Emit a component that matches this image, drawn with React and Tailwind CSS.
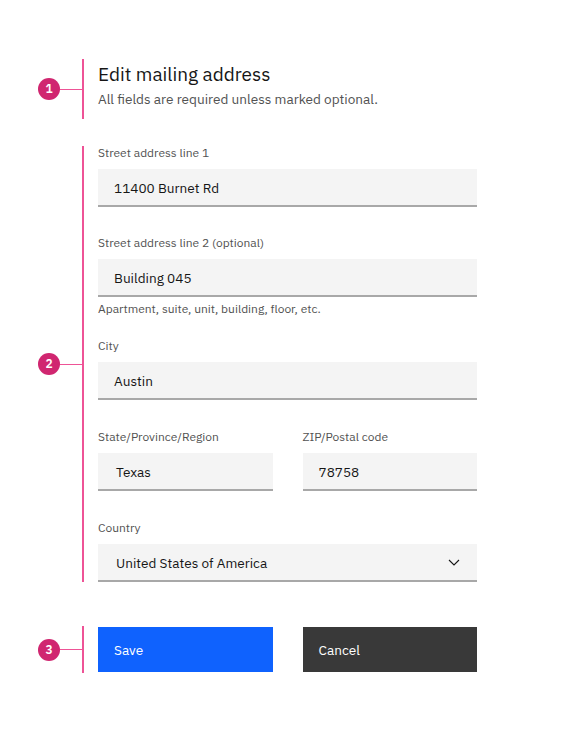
import React from "react";

const font = { fontFamily: '"IBM Plex Sans", "Noto Sans", Inter, sans-serif' };

function Badge({ n }) {
  return (
    <div className="flex w-[82px] shrink-0 items-center pl-[38px]">
      <div className="flex h-[22px] w-[22px] items-center justify-center rounded-full bg-[#d02670] text-[12px] font-semibold leading-none text-white">
        {n}
      </div>
      <div className="h-px flex-1 bg-[#ee5396]" />
    </div>
  );
}

function Section({ n, children, className = "" }) {
  return (
    <div className={"flex " + className}>
      <Badge n={n} />
      <div className="flex-1 border-l-2 border-[#ee5396] pl-[14px] pr-[99px]">{children}</div>
    </div>
  );
}

function Label({ children }) {
  return <div className="mb-[8px] h-[16px] text-[12px] leading-[16px] text-[#525252]">{children}</div>;
}

function Input({ value, pl = "pl-[16px]", children }) {
  return (
    <div
      className={
        "flex h-[38px] items-center border-b-2 border-[#a8a8a8] bg-[#f4f4f4] pr-[16px] pt-[2px] text-[13.6px] text-[#161616] " +
        pl
      }
    >
      <span className="flex-1">{value}</span>
      {children}
    </div>
  );
}

export default function App() {
  return (
    <div className="min-h-[732px] w-[576px] bg-white pt-[59px]" style={font}>
      <Section n="1" className="h-[60px]">
        <div className="pt-[1px] text-[19px] leading-[28px] text-[#161616]">Edit mailing address</div>
        <div className="mt-[1px] text-[13.6px] leading-[20px] text-[#525252]">All fields are required unless marked optional.</div>
      </Section>

      <Section n="2" className="mt-[27px] h-[436px]">
        <div className="-mt-[1px]">
          <Label>Street address line 1</Label>
          <Input value="11400 Burnet Rd" />
        </div>
        <div className="mt-[28px]">
          <Label>Street address line 2 (optional)</Label>
          <Input value="Building 045" />
          <div className="mt-[4px] text-[12px] leading-[16px] text-[#525252]">Apartment, suite, unit, building, floor, etc.</div>
        </div>
        <div className="mt-[21px]">
          <Label>City</Label>
          <Input value="Austin" />
        </div>
        <div className="mt-[29px] grid grid-cols-2 gap-[30px]">
          <div>
            <Label>State/Province/Region</Label>
            <Input value="Texas" pl="pl-[18px]" />
          </div>
          <div>
            <Label>ZIP/Postal code</Label>
            <Input value="78758" />
          </div>
        </div>
        <div className="mt-[29px]">
          <Label>Country</Label>
          <Input value="United States of America" pl="pl-[18px]">
            <svg width="16" height="16" viewBox="0 0 16 16" className="mr-[-1px] -mt-[2px]">
              <path d="M3 6 L8 11 L13 6" fill="none" stroke="#161616" strokeWidth="1.1" />
            </svg>
          </Input>
        </div>
      </Section>

      <Section n="3" className="mt-[44px] h-[47px]">
        <div className="grid grid-cols-2 gap-[30px] pt-[1px]">
          <div className="flex h-[45px] items-center bg-[#0f62fe] pl-[16px] pt-[2px] text-[13.6px] text-white">Save</div>
          <div className="flex h-[45px] items-center bg-[#393939] pl-[16px] pt-[2px] text-[13.6px] text-white">Cancel</div>
        </div>
      </Section>
    </div>
  );
}
